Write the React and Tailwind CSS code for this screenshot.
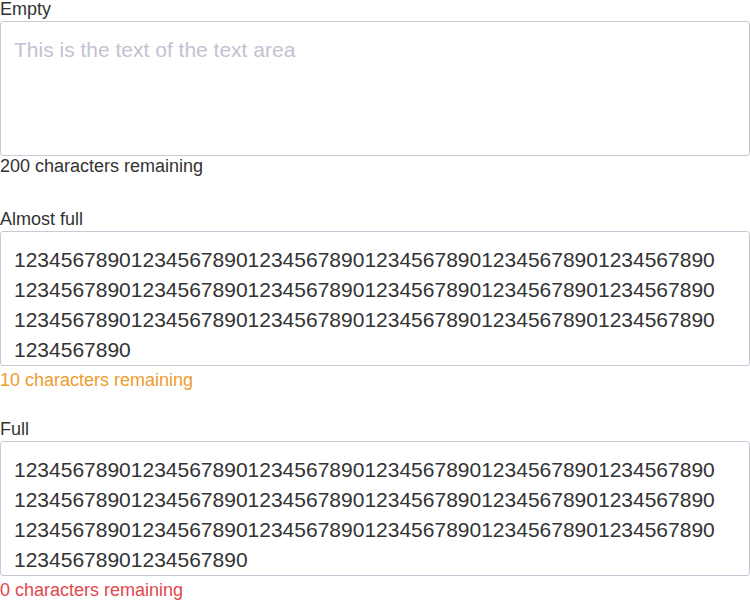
import { useState } from 'react';

const MAX = 200;
const chunk = '1234567890';

function CountedTextarea({ label, initial, placeholder }) {
  const [value, setValue] = useState(initial);
  const remaining = MAX - value.length;

  // colour + spacing of the counter depend on how close we are to the limit
  let counterClass = 'mt-[2px] mb-[35px] text-[#333333]';
  if (remaining === 0) counterClass = 'mt-[6px] mb-[31px] text-[#e2474c]';
  else if (remaining <= 10) counterClass = 'mt-[6px] mb-[31px] text-[#ee9c2c]';

  return (
    <div>
      <label className="block text-[18px] leading-[18px] text-[#333333] mb-[3px]">{label}</label>
      <textarea
        value={value}
        maxLength={MAX}
        placeholder={placeholder}
        onChange={(e) => setValue(e.target.value)}
        className="block w-full h-[135px] pt-[13px] pb-[13px] pl-[13px] pr-[30px] border border-[#c9c8d6] rounded-[3px] text-[21px] leading-[30px] text-[#333333] placeholder-[#c3c2d2] resize-none overflow-hidden outline-none bg-white"
      />
      <p className={`text-[18px] leading-[17px] ${counterClass}`}>
        {remaining} characters remaining
      </p>
    </div>
  );
}

export default function App() {
  return (
    <div className="w-[750px] bg-white" style={{ fontFamily: '"Liberation Sans", Arial, sans-serif' }}>
      <CountedTextarea label="Empty" initial="" placeholder="This is the text of the text area" />
      <CountedTextarea label="Almost full" initial={chunk.repeat(19)} />
      <CountedTextarea label="Full" initial={chunk.repeat(20)} />
    </div>
  );
}
